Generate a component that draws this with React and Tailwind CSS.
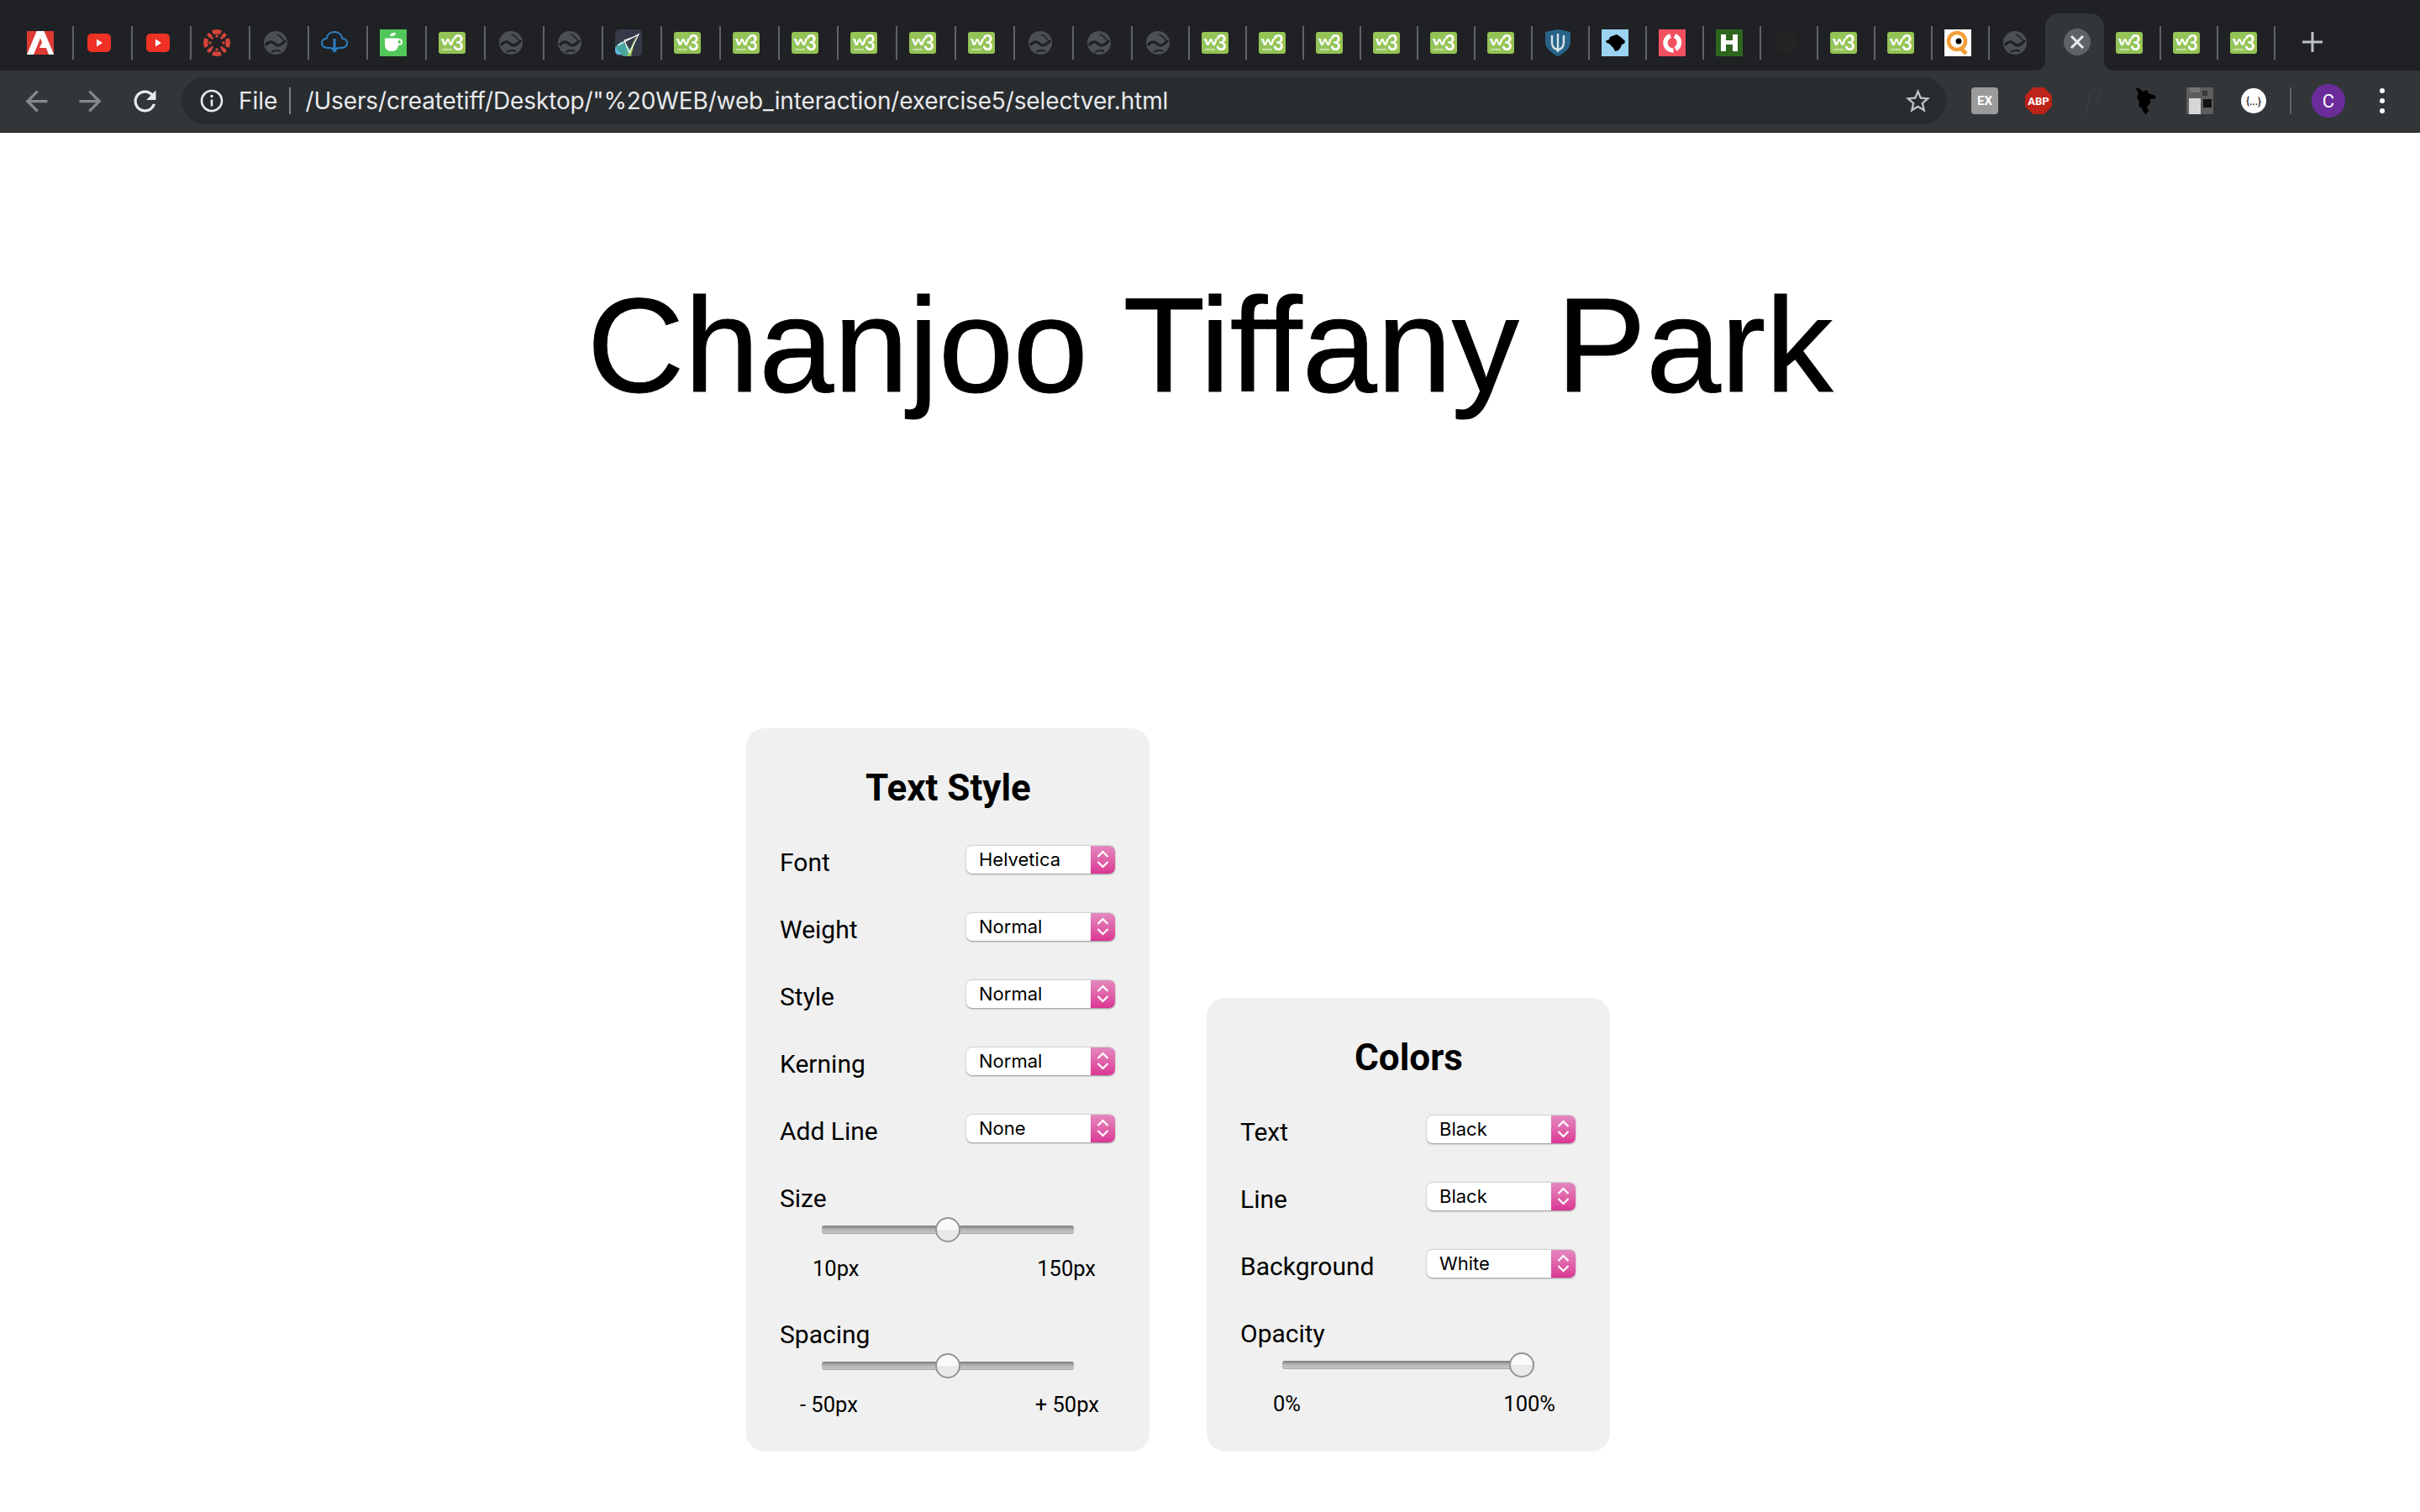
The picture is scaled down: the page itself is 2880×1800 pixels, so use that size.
import React from "react";

const GREEN = "#94c356";

// favicons, all drawn in a 32x32 box
const Adobe = () => (
  <svg width="32" height="32" viewBox="0 0 32 32">
    <rect y="2" width="32" height="28" fill="#dd3a34" />
    <path d="M11.5 2H20.5L32 29.5V30H26L23 22H15L18 15.5L16 10.5L8 30H0V29.5Z" fill="#fff" />
    <path d="M0 2H11.5L0 29.5Z" fill="#dd3a34" />
  </svg>
);
const YouTube = () => (
  <svg width="32" height="32" viewBox="0 0 32 32">
    <rect x="2" y="5" width="28" height="22" rx="5" fill="#ee3124" />
    <path d="M13 11.5L20 16L13 20.5Z" fill="#fff" />
  </svg>
);
const Canvas = () => (
  <svg width="32" height="32" viewBox="0 0 32 32" fill="#d4443a">
    <path d="M10 1.5C14 -0.5 18 -0.5 22 1.5L20 6C18 5.2 14 5.2 12 6Z" />
    <path d="M10 30.5C14 32.5 18 32.5 22 30.5L20 26C18 26.8 14 26.8 12 26Z" />
    <path d="M1.5 10C-0.5 14 -0.5 18 1.5 22L6 20C5.2 18 5.2 14 6 12Z" />
    <path d="M30.5 10C32.5 14 32.5 18 30.5 22L26 20C26.8 18 26.8 14 26 12Z" />
    <path d="M4 6.5L7 3.8L11 8L8 11Z" />
    <path d="M28 6.5L25 3.8L21 8L24 11Z" />
    <path d="M4 25.5L7 28.2L11 24L8 21Z" />
    <path d="M28 25.5L25 28.2L21 24L24 21Z" />
    <circle cx="16" cy="8" r="1.7" />
    <circle cx="16" cy="24" r="1.7" />
    <circle cx="8" cy="16" r="1.7" />
    <circle cx="24" cy="16" r="1.7" />
    <circle cx="10.5" cy="10.5" r="1.4" />
    <circle cx="21.5" cy="10.5" r="1.4" />
    <circle cx="10.5" cy="21.5" r="1.4" />
    <circle cx="21.5" cy="21.5" r="1.4" />
  </svg>
);
const Globe = () => (
  <svg width="32" height="32" viewBox="0 0 32 32" fill="none">
    <circle cx="16" cy="16" r="14" fill="#4c4f53" />
    <path d="M4 19C8 13.5 12 14 15.5 17.5C18.5 20.5 23 19 28 13" stroke="#202124" strokeWidth="3.2" />
    <path d="M17 6C20 7 23 9 25 13" stroke="#202124" strokeWidth="1.6" />
    <path d="M11 27C15 24.5 18 24.5 22 26" stroke="#202124" strokeWidth="2" />
  </svg>
);
const Cloud = () => (
  <svg width="32" height="32" viewBox="0 0 32 32" fill="none">
    <path d="M12 22H8C3 22 0.5 19 1 15.5C1.5 12.5 4 11 6.5 11C7.5 6 11.5 3 16 3C20.5 3 24.5 6 25.5 11C28 11 30.5 12.5 31 15.5C31.5 19 29 22 24 22H20" stroke="#2b7ec2" strokeWidth="2" />
    <path d="M16 11V26" stroke="#2b7ec2" strokeWidth="3" />
    <path d="M10.5 21.5H21.5L16 28Z" fill="#2b7ec2" />
  </svg>
);
const Coffee = () => (
  <svg width="32" height="32" viewBox="0 0 32 32">
    <rect width="32" height="32" fill="#52c75a" />
    <path d="M12 8C12 5 15 3.5 19 4C19 7 16 8.5 12 8Z" fill="#fff" />
    <path d="M6 10.5H22V18C22 23 19 26 14 26C9 26 6 23 6 18Z" fill="#fff" />
    <circle cx="23" cy="15" r="3" fill="none" stroke="#fff" strokeWidth="2" />
  </svg>
);
const W3 = () => (
  <svg width="32" height="32" viewBox="0 0 32 32">
    <rect y="3" width="32" height="26" rx="3" fill={GREEN} />
    <text x="2.5" y="19" textLength="17" lengthAdjust="spacingAndGlyphs" fontFamily="Roboto, sans-serif" fontWeight="500" fontSize="14" fill="#fff">w</text>
    <text x="17" y="25" textLength="13" lengthAdjust="spacingAndGlyphs" fontFamily="Roboto, sans-serif" fontWeight="500" fontSize="25" fill="#fff">3</text>
    <text x="4" y="25" fontFamily="Roboto, sans-serif" fontSize="3.4" fill="#fff">schools</text>
  </svg>
);
const Shard = () => (
  <svg width="32" height="32" viewBox="0 0 32 32">
    <rect width="32" height="32" rx="5" fill="#363a48" />
    <path d="M0 21L12 30H5C2 30 0 28 0 25Z" fill="#62b6dc" />
    <path d="M0 21L8 14L19 24L14 32H10Z" fill="#4aa79f" />
    <path d="M14 32L25 8L19 32Z" fill="#8fc04f" />
    <path d="M3 19L28 6L17 28L11 13L25 8" fill="none" stroke="#fff" strokeWidth="1.2" />
  </svg>
);
const Shield = () => (
  <svg width="32" height="32" viewBox="0 0 32 32">
    <path d="M16 0L31 3V15C31 22 24 28 16 32C8 28 1 22 1 15V3Z" fill="#286488" />
    <path d="M9 7V15C9 20 11 23 15 24M23 7V15C23 20 21 23 17 24M16 5V27" fill="none" stroke="#d5e2ea" strokeWidth="2.4" />
  </svg>
);
const Beast = () => (
  <svg width="32" height="32" viewBox="0 0 32 32">
    <rect width="32" height="32" fill="#9ad4f2" />
    <path d="M5 13.5L9 12L10 9L14 7.5L18 6L22 8.5L25 11L28 14L27 17L24 18L23 21L20 25L16 26L14 22L11 19L9 17L6 16Z" fill="#000" />
  </svg>
);
const Refresh = () => (
  <svg width="32" height="32" viewBox="0 0 32 32">
    <rect width="32" height="32" fill="#f2505f" />
    <path d="M14 7.5A9 9 0 0 0 17.5 25" fill="none" stroke="#fff" strokeWidth="5.5" />
    <path d="M19 7.5A9 9 0 0 1 20 23.5" fill="none" stroke="#fff" strokeWidth="5.5" />
  </svg>
);
const HIcon = () => (
  <svg width="32" height="32" viewBox="0 0 32 32">
    <rect width="32" height="32" fill="#2f661f" />
    <path d="M6 6H12V13H20V6H26V26H20V18H12V26H6Z" fill="#fff" />
  </svg>
);
const Dark = () => (
  <svg width="32" height="32" viewBox="0 0 32 32">
    <circle cx="16" cy="16" r="13" fill="#262422" />
  </svg>
);
const Quiz = () => (
  <svg width="32" height="32" viewBox="0 0 32 32">
    <rect width="32" height="32" fill="#fff" />
    <circle cx="15" cy="14" r="10" fill="none" stroke="#f29d38" strokeWidth="4.5" />
    <circle cx="17" cy="14" r="3.5" fill="#000" />
    <path d="M20 23L26 29" stroke="#f29d38" strokeWidth="5" />
  </svg>
);

const Tab = ({ width, children }) => (
  <div className={`${width} mt-[31px] h-[40px] pl-[14px] flex items-center shrink-0 border-r-2 border-[#5f6368]`}>
    {children}
  </div>
);

const firstTabs = [Adobe, YouTube, YouTube, Canvas, Globe, Cloud, Coffee, W3, Globe, Globe, Shard, W3, W3, W3, W3, W3, W3, Globe, Globe];
const secondTabs = [Globe, W3, W3, W3, W3, W3, W3, Shield, Beast, Refresh, HIcon, Dark, W3, W3, Quiz];

const TabStrip = () => (
  <div className="flex items-start h-[84px] pl-[18px] bg-[#202124]">
    {firstTabs.map((Icon, i) => (
      <Tab key={i} width="w-[70px]">
        <Icon />
      </Tab>
    ))}
    {secondTabs.map((Icon, i) => (
      <Tab key={i} width="w-[68px]">
        <Icon />
      </Tab>
    ))}
    <div className="w-[66px] mt-[31px] h-[40px] pl-[14px] flex items-center shrink-0">
      <Globe />
    </div>
    <div className="relative w-[70px] h-[68px] mt-4 pt-[18px] pl-[22px] shrink-0 rounded-t-[16px] bg-[#323639]">
      <span className="absolute bottom-0 -left-3 w-3 h-3 bg-[radial-gradient(circle_at_0_0,transparent_12px,#323639_12.5px)]"></span>
      <span className="absolute bottom-0 -right-3 w-3 h-3 bg-[radial-gradient(circle_at_100%_0,transparent_12px,#323639_12.5px)]"></span>
      <div className="w-8 h-8 rounded-full bg-[#5f6368] flex items-center justify-center">
        <svg width="18" height="18" viewBox="0 0 18 18">
          <path d="M2 2L16 16M16 2L2 16" stroke="#e8eaed" strokeWidth="3" />
        </svg>
      </div>
    </div>
    <Tab width="w-[68px]"><W3 /></Tab>
    <Tab width="w-[68px]"><W3 /></Tab>
    <Tab width="w-[68px]"><W3 /></Tab>
    <svg className="mt-[38px] ml-[32px]" width="24" height="24" viewBox="0 0 24 24">
      <path d="M12 0V24M0 12H24" stroke="#bdc1c6" strokeWidth="3" />
    </svg>
  </div>
);

const Toolbar = () => (
  <div className="flex items-center h-[74px] pl-[24px] pb-[1px] bg-[#323639] border-b border-[#1c1d1f]">
    <svg width="39" height="39" viewBox="0 0 24 24" fill="#85888c">
      <path d="M20 11H7.83l5.59-5.59L12 4l-8 8 8 8 1.41-1.41L7.83 13H20v-2z" />
    </svg>
    <svg className="ml-[25px] scale-x-[-1]" width="39" height="39" viewBox="0 0 24 24" fill="#85888c">
      <path d="M20 11H7.83l5.59-5.59L12 4l-8 8 8 8 1.41-1.41L7.83 13H20v-2z" />
    </svg>
    <svg className="ml-[26px]" width="39" height="39" viewBox="0 0 24 24" fill="#e8eaed">
      <path d="M17.65 6.35C16.2 4.9 14.21 4 12 4c-4.42 0-7.99 3.58-7.99 8s3.57 8 7.99 8c3.73 0 6.84-2.55 7.73-6h-2.08c-.82 2.33-3.04 4-5.65 4-3.31 0-6-2.69-6-6s2.69-6 6-6c1.66 0 3.14.69 4.22 1.78L13 11h7V4l-2.35 2.35z" />
    </svg>
    <div className="ml-[24px] w-[2100px] h-[56px] pl-[22px] pr-[16px] flex items-center rounded-full bg-[#292c2f] font-['Inter',sans-serif] text-[28px] text-[#e8eaed]">
      <svg width="28" height="28" viewBox="0 0 28 28" fill="none">
        <circle cx="14" cy="14" r="12" stroke="#e8eaed" strokeWidth="2.6" />
        <path d="M14 12.5V20.5" stroke="#e8eaed" strokeWidth="2.6" />
        <circle cx="14" cy="8.5" r="1.7" fill="#e8eaed" />
      </svg>
      <span className="ml-[18px]">File</span>
      <span className="ml-[14px] w-[2px] h-[32px] bg-[#7b7e82]"></span>
      <span className="ml-[17px] flex-1 tracking-[-0.13px]">/Users/createtiff/Desktop/"%20WEB/web_interaction/exercise5/selectver.html</span>
      <svg width="35" height="35" viewBox="0 0 24 24" fill="#bdc1c6">
        <path d="M22 9.24l-7.19-.62L12 2 9.19 8.63 2 9.24l5.46 4.73L5.82 21 12 17.27 18.18 21l-1.63-7.03L22 9.24zM12 15.4l-3.76 2.27 1-4.28-3.32-2.88 4.38-.38L12 6.1l1.71 4.04 4.38.38-3.32 2.88 1 4.28L12 15.4z" />
      </svg>
    </div>
    <div className="ml-[30px] flex items-center gap-[32px]">
      <svg width="32" height="32" viewBox="0 0 32 32">
        <rect width="32" height="32" rx="4" fill="#9b9b9b" />
        <text x="16" y="21" textAnchor="middle" fontFamily="Roboto, sans-serif" fontWeight="700" fontSize="15" fill="#fff">EX</text>
      </svg>
      <svg width="32" height="32" viewBox="0 0 32 32">
        <path d="M9.5 0H22.5L32 9.5V22.5L22.5 32H9.5L0 22.5V9.5Z" fill="#bd2318" />
        <text x="16" y="21" textAnchor="middle" fontFamily="Roboto, sans-serif" fontWeight="700" fontSize="13" fill="#fff">ABP</text>
      </svg>
      <svg width="32" height="32" viewBox="0 0 32 32" fill="none">
        <path d="M6 32C10 30 11 22 12 14C13 6 16 2 22 2M22 2C26 2 27 6 25 11C24 14 22 16 20 18" stroke="#3b3d3f" strokeWidth="1.6" />
      </svg>
      <svg width="32" height="32" viewBox="0 0 32 32">
        <path d="M3 0L9 2L13 5L17 3L19 7L27 10L28 13L21 14L21 19L17 23L19 28L16 32L13 30L11 25L7 22L8 17L5 12L7 7Z" fill="#000" />
      </svg>
      <svg width="32" height="32" viewBox="0 0 32 32">
        <rect width="32" height="32" fill="#5d5d5d" />
        <rect x="4" y="0" width="12" height="6" fill="#777" />
        <rect x="3" y="13" width="14" height="19" fill="#d6d6d6" />
        <rect x="20" y="14" width="10" height="10" fill="#111" />
        <rect x="19" y="4" width="6" height="6" fill="#3b3b3b" />
      </svg>
      <svg width="32" height="32" viewBox="0 0 32 32">
        <circle cx="16" cy="16" r="15" fill="#fff" />
        <text x="16" y="21" textAnchor="middle" fontFamily="Roboto, sans-serif" fontWeight="500" fontSize="12" fill="#222">{"{...}"}</text>
      </svg>
    </div>
    <span className="ml-[27px] w-[2px] h-[32px] bg-[#5f6368]"></span>
    <div className="ml-[24px] w-10 h-10 rounded-full bg-[#6a2c99] flex items-center justify-center font-['Roboto',sans-serif] text-[22px] text-white">
      C
    </div>
    <div className="ml-[41px] flex flex-col gap-[6px]">
      <span className="w-[6px] h-[6px] rounded-full bg-white"></span>
      <span className="w-[6px] h-[6px] rounded-full bg-white"></span>
      <span className="w-[6px] h-[6px] rounded-full bg-white"></span>
    </div>
  </div>
);

const Select = ({ value }) => (
  <div className="relative flex w-[177px] h-[34px] rounded-[7px] bg-white border-t border-[#d2d2d2] shadow-[0_1px_2px_rgba(0,0,0,0.4)] overflow-hidden font-['Inter',sans-serif] text-[22px] leading-[32px] text-black">
    <span className="flex-1 pl-[15px]">{value}</span>
    <span className="w-[29px] -mt-px bg-gradient-to-b from-[#e38ac0] to-[#db3394] flex items-center justify-center">
      <svg width="15" height="22" viewBox="0 0 15 22" fill="none">
        <path d="M1.5 8L7.5 2L13.5 8M1.5 14L7.5 20L13.5 14" stroke="#fff" strokeWidth="2.2" />
      </svg>
    </span>
  </div>
);

const SelectRow = ({ label, value }) => (
  <div className="flex justify-between items-start h-[80px]">
    <span className="text-[30px] leading-[42px]">{label}</span>
    <Select value={value} />
  </div>
);

const Slider = ({ label, percent, min, max, labelsClass }) => (
  <div className="h-[162px]">
    <div className="text-[30px] leading-[42px]">{label}</div>
    <div className="relative w-[300px] h-[10px] mt-[11px] ml-[50px] rounded-[3px] bg-gradient-to-b from-[#7b7b7b] via-[#b4b4b4] to-[#c6c6c6] border-b border-[#aaa]">
      <span
        className="absolute -top-[10px] -ml-[15px] w-[30px] h-[30px] rounded-full border-2 border-[#959595] bg-gradient-to-b from-[#fafafa] from-50% to-[#e9e9e9] to-50%"
        style={{ left: `${percent}%` }}
      ></span>
    </div>
    <div className={`flex justify-between mt-[23px] text-[25.5px] leading-[36px] ${labelsClass}`}>
      <span>{min}</span>
      <span>{max}</span>
    </div>
  </div>
);

const Panel = ({ title, height, children }) => (
  <div className={`${height} w-[480px] rounded-[22px] bg-[#f0f0f0] pl-[40px] pr-[41px] font-['Roboto',sans-serif] text-black`}>
    <h2 className="h-[139px] pt-[45px] pl-[2px] text-center text-[44px] leading-[52px] font-bold">{title}</h2>
    {children}
  </div>
);

export default function App() {
  return (
    <div className="w-[2880px] h-[1800px] overflow-hidden bg-white">
      <TabStrip />
      <Toolbar />
      <h1 className="pt-[173px] text-center text-[160px] leading-none text-black font-['Liberation_Sans',sans-serif] [-webkit-text-stroke:1px_black]">
        Chanjoo Tiffany Park
      </h1>
      <div className="flex items-end gap-[68px] mt-[376px] pl-[888px]">
        <Panel title="Text Style" height="h-[861px]">
          <SelectRow label="Font" value="Helvetica" />
          <SelectRow label="Weight" value="Normal" />
          <SelectRow label="Style" value="Normal" />
          <SelectRow label="Kerning" value="Normal" />
          <SelectRow label="Add Line" value="None" />
          <Slider label="Size" percent={50} min="10px" max="150px" labelsClass="pl-[39px] pr-[23px]" />
          <Slider label="Spacing" percent={50} min="- 50px" max="+ 50px" labelsClass="pl-[24px] pr-[19px]" />
        </Panel>
        <Panel title="Colors" height="h-[540px]">
          <SelectRow label="Text" value="Black" />
          <SelectRow label="Line" value="Black" />
          <SelectRow label="Background" value="White" />
          <Slider label="Opacity" percent={95} min="0%" max="100%" labelsClass="pl-[39px] pr-[24px]" />
        </Panel>
      </div>
    </div>
  );
}
